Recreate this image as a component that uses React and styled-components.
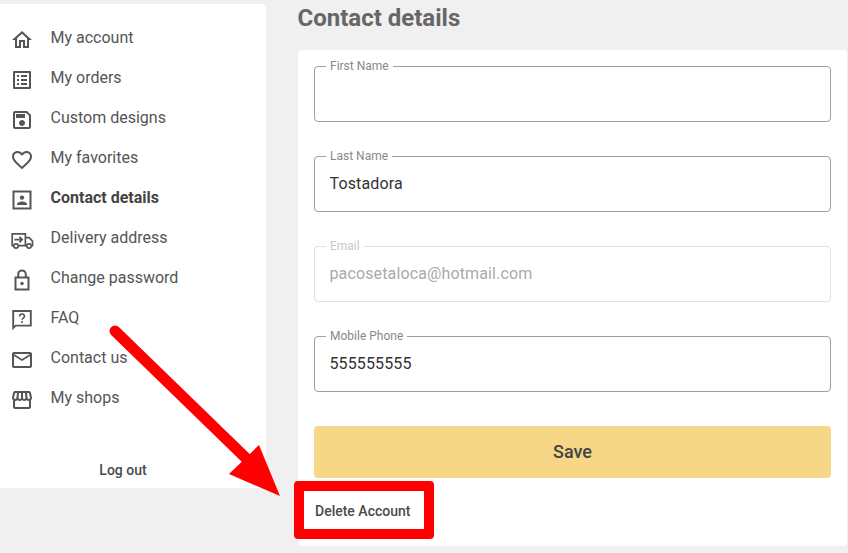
import React from 'react'
import styled, { createGlobalStyle } from 'styled-components'
import {
  MdOutlineHome,
  MdOutlineListAlt,
  MdOutlineSave,
  MdFavoriteBorder,
  MdMailOutline,
  MdOutlineStorefront,
} from 'react-icons/md'

const GlobalStyle = createGlobalStyle`
  html, body {
    margin: 0;
    height: 553px;
    overflow: hidden;
    background: #f0f0f0;
    font-family: Roboto, "Liberation Sans", sans-serif;
  }
`

const TruckIcon = () => (
  <svg width="24" height="24" viewBox="0 0 24 24" fill="none" stroke="currentColor" strokeWidth="1.7">
    <path d="M3.6 17.6H2.2V5.8h13.2v11.8H8.4" />
    <path d="M15.4 9.6h3.8l3.3 3.6v4.4h-1M15.4 17.6h1.6" />
    <circle cx="6" cy="18" r="2.2" />
    <circle cx="19" cy="18" r="2.2" />
    <path d="M4.5 11.6h7.5M9.4 8.8l2.8 2.8-2.8 2.8" />
  </svg>
)

const ContactIcon = () => (
  <svg width="24" height="24" viewBox="0 0 24 24" fill="currentColor">
    <path d="M3.5 3.5h17v17h-17z" fill="none" stroke="currentColor" strokeWidth="2" />
    <circle cx="12" cy="9.6" r="2.2" />
    <path d="M7 16.2c0-1.8 3-2.8 5-2.8s5 1 5 2.8v.8H7z" />
  </svg>
)

const LockIcon = () => (
  <svg width="24" height="24" viewBox="0 0 24 24" fill="none" stroke="currentColor" strokeWidth="2">
    <path d="M5.5 9.5h13v12h-13z" />
    <path d="M8.2 9.5V6.2a3.8 3.8 0 0 1 7.6 0v3.3" />
    <circle cx="12" cy="15.5" r="1.7" fill="currentColor" stroke="none" />
  </svg>
)

const FaqIcon = () => (
  <svg width="24" height="24" viewBox="0 0 24 24" fill="none" stroke="currentColor" strokeWidth="1.9">
    <path d="M3.2 3h17.6v14.6H5.6L3.2 20z" />
    <path d="M9.6 8.4c0-3.2 4.9-3.2 4.9-.1 0 1.8-2.4 1.8-2.4 3.5" strokeWidth="1.6" />
    <circle cx="12" cy="14" r="1" fill="currentColor" stroke="none" />
  </svg>
)

const menu = [
  { label: 'My account', icon: <MdOutlineHome size={24} /> },
  { label: 'My orders', icon: <MdOutlineListAlt size={24} /> },
  { label: 'Custom designs', icon: <MdOutlineSave size={24} /> },
  { label: 'My favorites', icon: <MdFavoriteBorder size={24} /> },
  { label: 'Contact details', icon: <ContactIcon />, active: true },
  { label: 'Delivery address', icon: <TruckIcon /> },
  { label: 'Change password', icon: <LockIcon /> },
  { label: 'FAQ', icon: <FaqIcon /> },
  { label: 'Contact us', icon: <MdMailOutline size={24} /> },
  { label: 'My shops', icon: <MdOutlineStorefront size={24} /> },
]

const fields = [
  { label: 'First Name', value: '' },
  { label: 'Last Name', value: 'Tostadora' },
  { label: 'Email', value: 'pacosetaloca@hotmail.com', disabled: true },
  { label: 'Mobile Phone', value: '555555555' },
]

const App = () => {
  return (
    <>
      <GlobalStyle />
      <Page>
        <Sidebar>
          <Menu>
            {menu.map((item) => (
              <MenuItem key={item.label} $active={item.active}>
                <IconBox>{item.icon}</IconBox>
                <span>{item.label}</span>
              </MenuItem>
            ))}
          </Menu>
          <LogOut>Log out</LogOut>
        </Sidebar>
        <Main>
          <Title>Contact details</Title>
          <Card>
            <Fields>
              {fields.map((f) => (
                <Field key={f.label} $disabled={f.disabled}>
                  <legend>{f.label}</legend>
                  <input defaultValue={f.value} disabled={f.disabled} />
                </Field>
              ))}
            </Fields>
            <SaveButton>Save</SaveButton>
            <DeleteLink>Delete Account</DeleteLink>
          </Card>
        </Main>
        <RedBox />
        <Arrow width="848" height="553" viewBox="0 0 848 553">
          <path d="M115 331L252 464" stroke="#ff0000" strokeWidth="11" strokeLinecap="round" />
          <path d="M259 445L229 474L280 496Z" fill="#ff0000" />
        </Arrow>
      </Page>
    </>
  )
}

const Page = styled.div`
  position: relative;
  display: flex;
  align-items: flex-start;
  gap: 32px;
  width: 848px;
  height: 553px;
  overflow: hidden;
`
const Sidebar = styled.aside`
  box-sizing: border-box;
  display: flex;
  flex-direction: column;
  justify-content: space-between;
  width: 266px;
  height: 484px;
  margin-top: 4px;
  padding: 13px 0 10px;
  background: #fff;
  border-radius: 0 4px 4px 0;
`
const Menu = styled.ul`
  list-style: none;
  margin: 0;
  padding: 0;
`
const MenuItem = styled.li`
  display: flex;
  align-items: flex-start;
  height: 40px;
  padding-left: 10px;
  font-size: 16px;
  line-height: 41px;
  color: ${(p) => (p.$active ? '#444' : '#555')};
  font-weight: ${(p) => (p.$active ? 700 : 400)};
`
const IconBox = styled.span`
  display: flex;
  width: 24px;
  height: 24px;
  margin: 11px 16.5px 0 0;
  color: #555;
`
const LogOut = styled.div`
  padding-right: 20px;
  font-size: 14px;
  font-weight: 500;
  line-height: 16px;
  text-align: center;
  color: #4a4a4a;
`
const Main = styled.main`
  width: 549px;
`
const Title = styled.h1`
  margin: 0 0 14px -0.5px;
  font-size: 24px;
  font-weight: 700;
  line-height: 36px;
  color: #666;
`
const Card = styled.section`
  box-sizing: border-box;
  height: 496px;
  padding: 9px 16px 0;
  background: #fff;
  border-radius: 4px;
`
const Fields = styled.div`
  display: flex;
  flex-direction: column;
  gap: 27px;
`
const Field = styled.fieldset`
  box-sizing: border-box;
  height: 63px;
  margin: 0;
  padding: 0 14.5px;
  min-width: 0;
  border: 1px solid ${(p) => (p.$disabled ? '#e0e0e0' : '#a0a0a0')};
  border-radius: 4px;

  legend {
    margin-left: -3.5px;
    padding: 0 4px;
    font-size: 12px;
    line-height: 14px;
    color: ${(p) => (p.$disabled ? '#c8c8c8' : '#888')};
  }

  input {
    display: block;
    width: 100%;
    height: 40px;
    padding: 0;
    border: 0;
    outline: 0;
    background: transparent;
    font: 400 16px Roboto, "Liberation Sans", sans-serif;
    letter-spacing: 0.13px;
    color: ${(p) => (p.$disabled ? '#aaa' : '#333')};
  }
`
const SaveButton = styled.button`
  display: block;
  width: 100%;
  height: 52px;
  margin-top: 34px;
  padding: 0 0 2px;
  border: 0;
  border-radius: 4px;
  background: #f6d687;
  font: 500 18px Roboto, "Liberation Sans", sans-serif;
  color: #444;
`
const DeleteLink = styled.a`
  display: block;
  margin: 25px 0 0 1px;
  font-size: 14px;
  font-weight: 500;
  line-height: 16px;
  color: #4a4a4a;
`
const RedBox = styled.div`
  position: absolute;
  left: 294px;
  top: 481px;
  width: 140px;
  height: 58px;
  box-sizing: border-box;
  border: 10px solid #ff0000;
  border-radius: 4px;
`
const Arrow = styled.svg`
  position: absolute;
  left: 0;
  top: 0;
  pointer-events: none;
`

export default App
